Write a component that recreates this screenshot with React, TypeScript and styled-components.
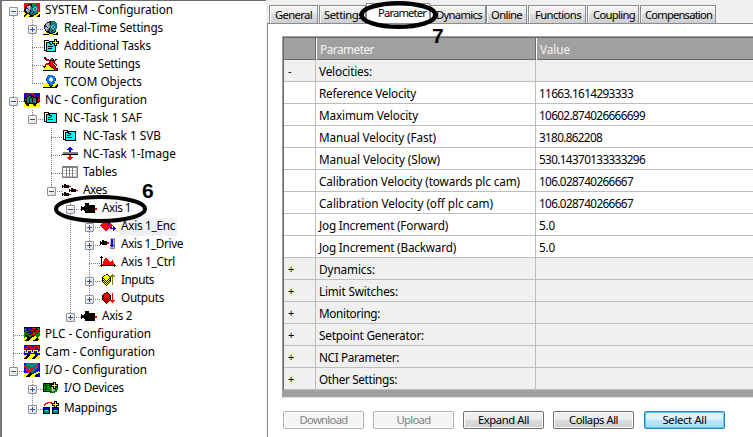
import React, { useLayoutEffect, useRef, useState } from 'react';
import styled, { createGlobalStyle, css } from 'styled-components';

const GlobalStyle = createGlobalStyle`
  * { box-sizing: border-box; }
  body { margin: 0; overflow: hidden; background: #f0f0f0; }
`;

const Screen = styled.div`
  position: relative;
  display: flex;
  width: 753px;
  height: 437px;
  overflow: hidden;
  background: #f0f0f0;
  color: #000;
  font: 12px/18px 'Noto Sans', 'Open Sans', sans-serif;
`;

/* ---------- text set to an exact width ---------- */

const Text = styled.span<{ $size?: number }>`
  display: inline-block;
  white-space: pre;
  font-size: ${(p) => p.$size ?? 11.75}px;
`;

function FitText({ text, width, size }: { text: string; width: number; size?: number }) {
  const ref = useRef<HTMLSpanElement>(null);
  const [spacing, setSpacing] = useState(0);
  useLayoutEffect(() => {
    const el = ref.current;
    if (!el) return;
    el.style.letterSpacing = '0px';
    const natural = el.getBoundingClientRect().width;
    setSpacing((width - natural) / text.length);
  }, [text, width]);
  return (
    <Text ref={ref} $size={size} style={{ letterSpacing: `${spacing}px` }}>
      {text}
    </Text>
  );
}

/* ---------- pixel icons ---------- */

const palette: Record<string, string> = {
  K: '#000000', R: '#ff0000', Y: '#ffff00', B: '#0000ff', C: '#00ffff', T: '#008080',
  W: '#ffffff', S: '#c0c0c0', G: '#808080', N: '#008000', O: '#808000', D: '#800000',
  L: '#0a78e6', M: '#a0b8c8', V: '#1c2c6c',
};

const icons: Record<string, string[]> = {
  system: [
    'RRRRRRRRRRRRRRRR',
    'RRRRRKKKTTTTRRRR',
    'RRRKKGGKTTTTTRRR',
    'RRKMMSGKTTTTTTRR',
    'RKVMSSGGKTMMTTRR',
    'RKVVMSGTTMTTMTRR',
    'KVMSVSGTTMTTMTRR',
    'KVMSSGKTTTMMTTRR',
    'KKVSGGKTTTTTTRRR',
    'YKKGGKTTTKTTTRYY',
    'YYKKKKTTKTTTKKYY',
    'YKKYYKKTTTKKYYYK',
    'KKYYYYKKKKYYYYKK',
    'KYYYYKKKKYYYYKKK',
  ],
  realtime: [
    '......KKTTTT....',
    '....KKGKTTTTT...',
    '...KMSGKTTTTTT..',
    '..KMSSGKTTTTTT..',
    '.KVMSGGTTMMTTT..',
    '.KVVMSGTMTTMTT..',
    '.VMSVSGTMTTMTT..',
    '.KMSSGKTTMMTTT..',
    '..VSGGKTTTTTT...',
    '..KGGKTTTKTTT...',
    '...KKKTTKTTTKYY.',
    '..YYKKKTTTKKYYK.',
    '.YYYYYKKKKYYYKK.',
    'KKKKKKYYYYKKKKK.',
  ],
  addTask: [
    '...........KKK..',
    '.KKKKK.....KYK..',
    '.KWWWWKKKKKKYKKK',
    '.KWKKKKCCKYYYYYK',
    '.KWKCCKKCKKKYKKK',
    '.KWKCCCKKCCKYK..',
    '.KWKCCCCCCCKKK..',
    '.KWKCKKKKKCCK...',
    '.KWKCCCCCCCCK...',
    '.KWKCKKKKCCCK...',
    '.KWKCCCCCCCCK...',
    '.KKKCCCCCCCCK...',
    '...KKKKKKKKKK...',
  ],
  task: [
    '.KKKKK..........',
    '.KWWWKKKKKKKKK..',
    '.KWKKKKCCCCCCK..',
    '.KWKCCKKKCCCCK..',
    '.KWKCCCCKCCCCK..',
    '.KWKCKKKCCCCCK..',
    '.KWKCCCCCCCCCK..',
    '.KWKCKKKKKCCCK..',
    '.KWKCCCCCCCCCK..',
    '.KKKCCCCCCCCCK..',
    '...KKKKKKKKKKK..',
  ],
  route: [
    '.KK.............',
    '.KRR....RK......',
    '..KRRK.RRRK.KK..',
    '...KRRKKRKKRR...',
    '......RRRRRK....',
    '......KRRRKK....',
    '...RRKKRRK.KR...',
    '..RRRRRRRRK.RR..',
    '..K...KKRRRK.K..',
    'KKKYYY.KRRRRK...',
    '.KYYYYYYKKRRKYY.',
    '.YYYYYYYYYKRRKK.',
    'YYYYYYYYYYYKRRK.',
    'KKKKKKKKKKKKKKK.',
  ],
  tcom: [
    '.....VLLLL......',
    '....VLLLLLLL....',
    '....LLLMMLLL....',
    '...VLLMWWMLLV...',
    '...VLLWWWWLLV...',
    '...VLLMWWMLLV...',
    '....LLLMMLLL....',
    '....VLLLLLLV....',
    '.YYYYVLLLLVYYY..',
    'YYYYYYVLLLYYYYK.',
    'YYYYYYKVLKYYYKK.',
    'YYYYYYYKKYYYKKK.',
    'KKKKKKKKKKKKKK..',
  ],
  nc: [
    'BBBBDRRRRBBBBBBB',
    'BBBDRKBBRRBBBBBB',
    'BBBRBKKKKRRBBBBB',
    'BBDKKTTKKKRKBBDB',
    'BKKTTTKKTKKKKKKD',
    'KKKTTKTTKTTTKKRK',
    'KTKTTKTTKTTTKKRR',
    'KTKTTKTTKTTTKKRR',
    'KKKTTKTTKTTTKKRK',
    'YKKTTKTTKTTTKKKY',
    'YKKKKKKKKKKKKYYY',
    'YYKDKYYYYKDKYYYY',
    'YYYKKYYYYYKKYYYY',
    'YYYYYYYYYYYYYYYY',
  ],
  image: [
    '.......BB.......',
    '......BBBB......',
    '.....BBBBBB.....',
    '.......BB.......',
    '.......BB.......',
    '.GGGGGGGGGGGGGGG',
    '.GGGGGGGGGGGGGGG',
    'KKKKKKKKKKKKKKKK',
    '.......RR.......',
    '.......RR.......',
    '.....RRRRRR.....',
    '......RRRR......',
    '.......RR.......',
  ],
  table: [
    'GGGGGGGGGGGGGGGG',
    'GGGGGGGGGGGGGGGG',
    'GWWWGWWGWWGWWWSG',
    'GWWWGWWGWWGWWWSG',
    'GSSSGSSGSSGSSSSG',
    'GWWWGWWGWWGWWWSG',
    'GWWWGWWGWWGWWWSG',
    'GSSSGSSGSSGSSSSG',
    'GWWWGWWGWWGWWWSG',
    'GWWWGWWGWWGWWWSG',
    'GSSSGSSGSSGSSSSG',
    'GGGGGGGGGGGGGGGG',
  ],
  axes: [
    '..KK............',
    'K.KKKKK.........',
    'KKKKKKKRR.......',
    'K.KKKKK.........',
    '.........KK.....',
    '.......K.KKKKK..',
    '.......KKKKKKKRR',
    '.......K.KKKKK..',
    '..KK............',
    'K.KKKKK.........',
    'KKKKKKKRR.......',
    'K.KKKKK.........',
  ],
  axis: [
    '....KKKK........',
    '....KKKK........',
    '....KKKKKKKKKK..',
    'K..KKKKKKKKKKK..',
    'KKKKKKKKKKKKKK..',
    'KKKKKKKKKKKKKKRR',
    'KKKKKKKKKKKKKKRR',
    'K..KKKKKKKKKKK..',
    '....KKKKKKKKKK..',
    '....KKKKKKKKKK..',
  ],
  enc: [
    '....RRRRR.......',
    '...RRRRRRB......',
    '..RRRRRRBRR.....',
    '.RRRRRRRBRRR....',
    'RRRRRRRRBRRRR...',
    '.RRRRRRRRBRR.B..',
    '..RRRRRRRRBB.BB.',
    '...RRRRRR.BBBBBB',
    '....RRRR.....BB.',
    '.....RR......B..',
  ],
  drive: [
    '..........SSSSG.',
    '..........SBBSG.',
    '..KK......SBBSG.',
    'K.KKKKK...SBBSG.',
    'KKKKKKKRR.SBBSG.',
    'KKKKKKKRR.SBBSG.',
    'K.KKKKK...SBBSG.',
    '..........BBBBG.',
    '..........SBBSG.',
    '..........SSSSG.',
    '..........GGGGG.',
  ],
  ctrl: [
    '.K..............',
    'KKK.............',
    '.K...RR.........',
    '.K..RRRR........',
    '.K..RRRRR...R...',
    '.K.RRRRRRR.RR...',
    '.K.RRRRRRRRRRR..',
    '.K.RRRRRRRRRRR..',
    '.KRRRRRRRRRRRRK.',
    'KKKKKKKKKKKKKKKK',
    '.K............K.',
  ],
  inputs: [
    '......KK....O...',
    '....KYYYK..OOO..',
    '...KYYYYYKOOOOO.',
    '..KYYYYYYYK.O...',
    '..KKYYYYYKK.O...',
    '..KYKYYYKYK.O...',
    '..KKYKYKYKK.O...',
    '..KYKYKYKYK.O...',
    '...KYKYKYK..O...',
    '....KYKYK...O...',
    '.....KYK....O...',
    '......K.........',
  ],
  outputs: [
    '......KK........',
    '....KRRRK...R...',
    '...KRRRRRK..R...',
    '..KRRRRRRRK.R...',
    '..KKRRRRRKK.R...',
    '..KRKRRRKRK.R...',
    '..KKRKRKRKK.R...',
    '..KRKRKRKRK.R...',
    '...KRKRKRKRRRRR.',
    '....KRKRK..RRR..',
    '.....KRK....R...',
    '......K.........',
  ],
  plc: [
    'KKKNKKKKKNKKKKKK',
    'KNKKBBBKRRRRKNNK',
    'NNNKBNBKKKKBKKNN',
    'KNKKKNKRRRKBRRRK',
    'KRRRRKBBKKKKKNKK',
    'NNNKKKBBKNNRRNNN',
    'NNKRRRRKKNNKNKNN',
    'NNNNNKKNRRRRNNNN',
    'NKKKNNNNKKKNNNNN',
    'NNKKKNNKKKYYNNNY',
    'NYYKKKKKYYYYYKYY',
    'YYYKKKKYYYYYKKYY',
    'YYKKKKYYYYYKKKKY',
    'YKKKKYYYYKKKKKYY',
  ],
  cam: [
    'BBBBBBBBBBBBBBBB',
    'BBBRRRRBBBRRRRRB',
    'BBBRBBRBBBRBBBRB',
    'RRRRBBRRRRRBBBRR',
    'BBBBBBBBBBBBBBBB',
    'YYBYYYYYBYYYYYBB',
    'BYBYBBBYBYBBBYBY',
    'BYYYBBBYYYBBBYYY',
    'BBBBBBBBBBBBBBBB',
    'BBBBKKYYYYYBBKBB',
    'YYYKKKYYYYYKKKYY',
    'YYKKKYYYYYKKKYYY',
    'YKKKYYYYYKKKYYYY',
    'KKKYYYYYKKKYYYYY',
  ],
  io: [
    'BBTTTTTTTTTTTTBB',
    'BBTTTTTTTTTTTTBB',
    'RRRTTTTTTTTTRRRB',
    'RRTRTTTTTTTRRTBB',
    'BRRTRRRTTRRRTTBB',
    'BBRRTTRRRRTTTBBB',
    'BBTRRTTRRTTTBBBB',
    'BBRRRRRRTTTBBBBB',
    'BBBRRRRTTTBBBBYB',
    'BBBBRRKTTBBBYYYY',
    'YYYYYKKKKBYYYYKB',
    'YYYYKKKKYYYYKKBB',
    'YYYKKKKYYYYKKKBB',
    'YYKKKKYYYYYKKBBB',
  ],
  devices: [
    '..........KKK...',
    'KKKKKKKKKKKYK...',
    'KNNNNNNKKKKYKKK.',
    'KNKKNKKNKYYYYYK.',
    'KNNNNNNKKKKYKKK.',
    'KRRKRRKNGSKYKNN.',
    'KNNNNNNNGSKKKNN.',
    'KNKKNKKNGSSGNNN.',
    'KNNNNNNNGSSGNN..',
    'KKKKKKKKNGGNNN..',
    '.......KNNNN....',
  ],
  mappings: [
    '...........KKK..',
    '....RRRRR..KYK..',
    '..RRR...RKKKYKKK',
    '.RR......KYYYYYK',
    '.R.......KKKYKKK',
    '...........KYK..',
    'KKKKKKK..KKKKKKK',
    'KBBBBBK..KBBBBBK',
    'KKKKKKK..KKKKKKK',
    'KTCCCTK..KTCCCTK',
    'KTTTTTK..KTTTTTK',
    'KTTTTTK..KTTTTTK',
    'KKKKKKK..KKKKKKK',
  ],
};

const IconBox = styled.svg`
  flex: none;
  display: block;
  width: 16px;
  height: 14px;
`;

function PixelIcon({ name }: { name: string }) {
  const rows = icons[name];
  const top = Math.floor((14 - rows.length) / 2);
  return (
    <IconBox viewBox="0 0 16 14" shapeRendering="crispEdges">
      {rows.flatMap((row, y) =>
        [...row].map((c, x) =>
          c === '.' ? null : (
            <rect key={`${x}-${y}`} x={x} y={y + top} width="1" height="1" fill={palette[c]} />
          ),
        ),
      )}
    </IconBox>
  );
}

/* ---------- tree ---------- */

const TreePanel = styled.div`
  flex: none;
  width: 266px;
  height: 437px;
  padding: 1px 0 0 2px;
  background: #fff;
  border-top: 1px solid #6c6c6c;
  border-left: 2px solid #787878;
`;

const TreeRow = styled.div<{ $tall?: boolean }>`
  display: flex;
  height: ${(p) => (p.$tall ? 20 : 18)}px;
`;

const dots = css`
  background-image: repeating-linear-gradient(to bottom, #808080 0 1px, transparent 1px 2px);
`;

type Line = 'none' | 'pass' | 'tee' | 'elbow' | 'start';

const Guide = styled.div<{ $line: Line; $tall?: boolean; $own?: boolean }>`
  position: relative;
  flex: none;
  display: flex;
  align-items: ${(p) => (p.$tall ? 'flex-end' : 'flex-start')};
  width: ${(p) => (p.$own ? 20 : 19)}px;
  height: 100%;
  padding: ${(p) => (p.$tall ? '0 0 4px 5px' : '5px 0 0 5px')};

  &::before {
    content: '';
    position: absolute;
    left: 9px;
    width: 1px;
    top: ${(p) => (p.$line === 'start' ? 10 : 0)}px;
    bottom: ${(p) => (p.$line === 'elbow' ? 8 : 0)}px;
    ${(p) => (p.$line === 'none' ? '' : dots)}
  }

  &::after {
    content: '';
    position: absolute;
    left: 9px;
    right: 0;
    bottom: 8px;
    height: 1px;
    background-image: ${(p) =>
      p.$own ? 'repeating-linear-gradient(to right, #808080 0 1px, transparent 1px 2px)' : 'none'};
  }
`;

const Expander = styled.div<{ $open: boolean }>`
  position: relative;
  z-index: 1;
  width: 9px;
  height: 9px;
  border: 1px solid #919191;
  border-radius: 1px;
  background:
    linear-gradient(#35509c, #35509c) 1px 3px / 5px 1px no-repeat,
    ${(p) => (p.$open ? '' : 'linear-gradient(#35509c, #35509c) 3px 1px / 1px 5px no-repeat,')}
    linear-gradient(135deg, #fff, #dcdcdc);
`;

const Label = styled.div<{ $selected?: boolean }>`
  height: 18px;
  margin-left: 3px;
  padding: 0 2px;
  line-height: 15px;
  background: ${(p) => (p.$selected ? '#f0f0f0' : 'transparent')};
`;

const IconSlot = styled.div`
  padding-top: 1px;
`;

const NodeBody = styled.div<{ $tall?: boolean }>`
  display: flex;
  padding-top: ${(p) => (p.$tall ? 2 : 0)}px;
`;

type Node = {
  label: string; w: number; icon: string; line: Line;
  up?: Line[]; exp?: '+' | '-'; selected?: boolean; tall?: boolean;
};

const P: Line = 'pass';
const N: Line = 'none';

const nodes: Node[] = [
  { label: 'SYSTEM - Configuration', w: 128, icon: 'system', line: 'start', exp: '-' },
  { label: 'Real-Time Settings', w: 99, icon: 'realtime', line: 'tee', up: [P], exp: '+' },
  { label: 'Additional Tasks', w: 87, icon: 'addTask', line: 'tee', up: [P] },
  { label: 'Route Settings', w: 76, icon: 'route', line: 'tee', up: [P] },
  { label: 'TCOM Objects', w: 78, icon: 'tcom', line: 'elbow', up: [P] },
  { label: 'NC - Configuration', w: 102, icon: 'nc', line: 'tee', exp: '-' },
  { label: 'NC-Task 1 SAF', w: 78, icon: 'task', line: 'elbow', up: [P], exp: '-' },
  { label: 'NC-Task 1 SVB', w: 78, icon: 'task', line: 'tee', up: [P, N] },
  { label: 'NC-Task 1-Image', w: 93, icon: 'image', line: 'tee', up: [P, N] },
  { label: 'Tables', w: 34, icon: 'table', line: 'tee', up: [P, N] },
  { label: 'Axes', w: 24, icon: 'axes', line: 'elbow', up: [P, N], exp: '-' },
  { label: 'Axis 1', w: 29, icon: 'axis', line: 'tee', up: [P, N, N], exp: '-' },
  { label: 'Axis 1_Enc', w: 54, icon: 'enc', line: 'tee', up: [P, N, N, P], exp: '+', selected: true },
  { label: 'Axis 1_Drive', w: 62, icon: 'drive', line: 'tee', up: [P, N, N, P], exp: '+' },
  { label: 'Axis 1_Ctrl', w: 54, icon: 'ctrl', line: 'tee', up: [P, N, N, P] },
  { label: 'Inputs', w: 33, icon: 'inputs', line: 'tee', up: [P, N, N, P], exp: '+' },
  { label: 'Outputs', w: 43, icon: 'outputs', line: 'elbow', up: [P, N, N, P], exp: '+' },
  { label: 'Axis 2', w: 30, icon: 'axis', line: 'elbow', up: [P, N, N], exp: '+' },
  { label: 'PLC - Configuration', w: 106, icon: 'plc', line: 'tee' },
  { label: 'Cam - Configuration', w: 110, icon: 'cam', line: 'tee' },
  { label: 'I/O - Configuration', w: 102, icon: 'io', line: 'elbow', exp: '-' },
  { label: 'I/O Devices', w: 60, icon: 'devices', line: 'tee', up: [N], exp: '+' },
  { label: 'Mappings', w: 53, icon: 'mappings', line: 'elbow', up: [N], exp: '+', tall: true },
];

/* ---------- property pane ---------- */

const Pane = styled.div`
  flex: 1;
  min-width: 0;
  display: flex;
  flex-direction: column;
  padding: 3px 0 0 1px;
`;

const TabBar = styled.div`
  display: flex;
  align-items: flex-end;
  height: 20px;
  padding-left: 2px;
`;

const Tab = styled.div<{ $w: number; $gap?: number; $pad: number; $active?: boolean }>`
  flex: none;
  width: ${(p) => p.$w}px;
  height: ${(p) => (p.$active ? 20 : 18)}px;
  margin-right: ${(p) => p.$gap ?? 0}px;
  padding-left: ${(p) => p.$pad}px;
  border: 1px solid #898c95;
  border-bottom: 0;
  box-shadow: inset 1px 1px 0 #fcfcfc;
  background: ${(p) =>
    p.$active ? '#fff' : 'linear-gradient(#f2f2f2, #ebebeb 50%, #dddddd 50%, #cfcfcf)'};
  line-height: 18px;
`;

const PaneBody = styled.div`
  flex: 1;
  padding: 12px 0 0 14px;
  background: #fff;
  border-top: 1px solid #898c95;
  border-left: 1px solid #898c95;
`;

const Grid = styled.div`
  height: 362px;
  border-top: 1px solid #a0a0a0;
  border-left: 1px solid #a0a0a0;
  border-bottom: 1px solid #e3e3e3;
  background: #a0a0a0;
`;

const GridInner = styled.div`
  border-top: 1px solid #696969;
  border-left: 1px solid #696969;
`;

const columns = css`
  display: grid;
  grid-template-columns: 32px 220px 1fr;
`;

const HeaderRow = styled.div`
  ${columns}
  height: 22px;
  border-bottom: 1px solid #696969;
  background: #a0a0a0;
  color: #f4f4f4;
  line-height: 22px;
`;

const HeaderCell = styled.div<{ $divider?: boolean }>`
  padding-left: 4px;
  ${(p) => p.$divider && 'border-right: 1px solid #696969; box-shadow: 1px 0 0 #fff;'}
`;

const DataRow = styled.div<{ $group?: boolean }>`
  ${columns}
  height: 22px;
  border-bottom: 1px solid #bdbdbd;
  background: ${(p) => (p.$group ? '#f0f0f0' : '#fff')};
  line-height: 22px;
`;

const Cell = styled.div<{ $last?: boolean }>`
  padding-left: 3px;
  ${(p) => !p.$last && 'border-right: 1px solid #bdbdbd;'}
`;

const Sign = styled(Cell)`
  font-size: 11px;
  padding-left: 4px;
`;

const rows: { name: string; w: number; value?: string; vw?: number; sign?: string }[] = [
  { name: 'Velocities:', w: 53, sign: '-' },
  { name: 'Reference Velocity', w: 97, value: '11663.1614293333', vw: 94 },
  { name: 'Maximum Velocity', w: 99, value: '10602.874026666699', vw: 106 },
  { name: 'Manual Velocity (Fast)', w: 117, value: '3180.862208', vw: 63 },
  { name: 'Manual Velocity (Slow)', w: 121, value: '530.14370133333296', vw: 106 },
  { name: 'Calibration Velocity (towards plc cam)', w: 201, value: '106.028740266667', vw: 94 },
  { name: 'Calibration Velocity (off plc cam)', w: 174, value: '106.028740266667', vw: 94 },
  { name: 'Jog Increment (Forward)', w: 129, value: '5.0', vw: 16 },
  { name: 'Jog Increment (Backward)', w: 137, value: '5.0', vw: 16 },
  { name: 'Dynamics:', w: 56, sign: '+' },
  { name: 'Limit Switches:', w: 79, sign: '+' },
  { name: 'Monitoring:', w: 61, sign: '+' },
  { name: 'Setpoint Generator:', w: 105, sign: '+' },
  { name: 'NCI Parameter:', w: 80, sign: '+' },
  { name: 'Other Settings:', w: 78, sign: '+' },
];

const ButtonBar = styled.div`
  display: flex;
  gap: 9px;
  padding: 13px 0 0 1px;
`;

const PushButton = styled.button<{ $kind?: 'disabled' | 'default' }>`
  flex: none;
  display: flex;
  justify-content: center;
  width: 81px;
  height: 18px;
  padding: 0;
  font: inherit;
  line-height: 16px;
  color: #000;
  border: 1px solid #707070;
  border-radius: 2px;
  background: linear-gradient(#f2f2f2, #ebebeb 50%, #dddddd 50%, #cfcfcf);
  box-shadow: inset 0 0 0 1px #fbfbfb;
  ${(p) =>
    p.$kind === 'disabled' &&
    css`
      color: #838383;
      border-color: #adb2b5;
      background: #f4f4f4;
    `}
  ${(p) =>
    p.$kind === 'default' &&
    css`
      margin-left: 1px;
      border-color: #3c7fb1;
      background: linear-gradient(#eaf6fd, #d9f0fc 50%, #bee6fd 50%, #a7d9f5);
      box-shadow: inset 0 0 0 1px #48d1f8;
    `}
`;

/* ---------- annotations ---------- */

const Marks = styled.svg`
  position: absolute;
  inset: 0;
  pointer-events: none;
`;

const Callout = styled.div<{ $x: number; $y: number }>`
  position: absolute;
  left: ${(p) => p.$x}px;
  top: ${(p) => p.$y}px;
  font: bold 21px/21px 'Liberation Sans', Arial, sans-serif;
`;

export default function App() {
  return (
    <Screen>
      <GlobalStyle />
      <TreePanel>
        {nodes.map((n) => (
          <TreeRow key={n.label} $tall={n.tall}>
            {(n.up ?? []).map((l, i) => (
              <Guide key={i} $line={l} />
            ))}
            <Guide $line={n.line} $tall={n.tall} $own>
              {n.exp && <Expander $open={n.exp === '-'} />}
            </Guide>
            <NodeBody $tall={n.tall}>
              <IconSlot>
                <PixelIcon name={n.icon} />
              </IconSlot>
              <Label $selected={n.selected}>
                <FitText text={n.label} width={n.w} />
              </Label>
            </NodeBody>
          </TreeRow>
        ))}
      </TreePanel>

      <Pane>
        <TabBar>
          <Tab $w={49} $gap={1} $pad={5}><FitText text="General" width={37} size={11.25} /></Tab>
          <Tab $w={47} $pad={4}><FitText text="Settings" width={39} size={11.25} /></Tab>
          <Tab $w={64} $pad={11} $active><FitText text="Parameter" width={48} size={11.25} /></Tab>
          <Tab $w={56} $pad={5}><FitText text="Dynamics" width={46} size={11.25} /></Tab>
          <Tab $w={41} $gap={1} $pad={4}><FitText text="Online" width={31} size={11.25} /></Tab>
          <Tab $w={58} $gap={1} $pad={6}><FitText text="Functions" width={46} size={11.25} /></Tab>
          <Tab $w={52} $gap={1} $pad={5}><FitText text="Coupling" width={42} size={11.25} /></Tab>
          <Tab $w={76} $pad={4}><FitText text="Compensation" width={67} size={11.25} /></Tab>
        </TabBar>
        <PaneBody>
          <Grid>
            <GridInner>
              <HeaderRow>
                <HeaderCell $divider />
                <HeaderCell $divider><FitText text="Parameter" width={54} /></HeaderCell>
                <HeaderCell><FitText text="Value" width={30} /></HeaderCell>
              </HeaderRow>
              {rows.map((r) => (
                <DataRow key={r.name} $group={!!r.sign}>
                  <Sign>{r.sign}</Sign>
                  <Cell><FitText text={r.name} width={r.w} /></Cell>
                  <Cell $last>{r.value && <FitText text={r.value} width={r.vw ?? 0} />}</Cell>
                </DataRow>
              ))}
            </GridInner>
          </Grid>
          <ButtonBar>
            <PushButton $kind="disabled"><FitText text="Download" width={48} size={11.25} /></PushButton>
            <PushButton $kind="disabled"><FitText text="Upload" width={34} size={11.25} /></PushButton>
            <PushButton><FitText text="Expand All" width={51} size={11.25} /></PushButton>
            <PushButton><FitText text="Collaps All" width={49} size={11.25} /></PushButton>
            <PushButton $kind="default"><FitText text="Select All" width={44} size={11.25} /></PushButton>
          </ButtonBar>
        </PaneBody>
      </Pane>

      <Marks width="753" height="437" fill="none" stroke="#000">
        <ellipse cx="100.5" cy="209" rx="44.5" ry="12" strokeWidth="4" />
        <ellipse cx="398.5" cy="15" rx="37" ry="11.8" strokeWidth="4.6" />
      </Marks>
      <Callout $x={142} $y={180}>6</Callout>
      <Callout $x={432} $y={25}>7</Callout>
    </Screen>
  );
}
